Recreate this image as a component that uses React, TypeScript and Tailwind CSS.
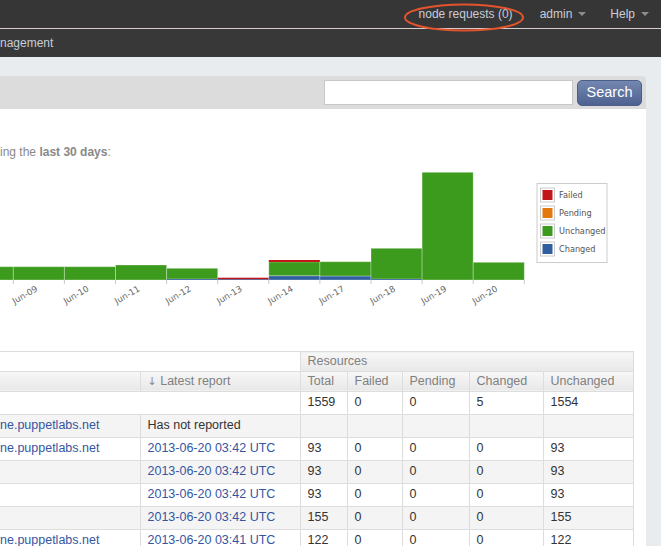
import React from "react";

const GREEN = "#3c9b1c";
const BLUE = "#2f5f9e";
const RED = "#c2161a";
const ORANGE = "#e3780f";

type Seg = { c: string; h: number };
const BW = 51.1;
const X0 = 13.3;
const BASE = 119;

const bars: { x: number; segs: Seg[]; label?: string }[] = [
  { x: X0 - BW, segs: [{ c: GREEN, h: 13.3 }] },
  { x: X0, segs: [{ c: GREEN, h: 13.3 }], label: "Jun-09" },
  { x: X0 + BW, segs: [{ c: GREEN, h: 13.3 }], label: "Jun-10" },
  { x: X0 + BW * 2, segs: [{ c: GREEN, h: 15 }], label: "Jun-11" },
  { x: X0 + BW * 3, segs: [{ c: BLUE, h: 1 }, { c: GREEN, h: 10.7 }], label: "Jun-12" },
  { x: X0 + BW * 4, segs: [{ c: BLUE, h: 0.8 }, { c: RED, h: 1.5 }], label: "Jun-13" },
  { x: X0 + BW * 5, segs: [{ c: BLUE, h: 4.3 }, { c: GREEN, h: 13.7 }, { c: RED, h: 2 }], label: "Jun-14" },
  { x: X0 + BW * 6, segs: [{ c: BLUE, h: 4 }, { c: GREEN, h: 14.3 }], label: "Jun-17" },
  { x: X0 + BW * 7, segs: [{ c: BLUE, h: 1 }, { c: GREEN, h: 30.7 }], label: "Jun-18" },
  { x: X0 + BW * 8, segs: [{ c: GREEN, h: 107.7 }], label: "Jun-19" },
  { x: X0 + BW * 9, segs: [{ c: GREEN, h: 17.7 }], label: "Jun-20" },
];

function Chart() {
  const legend = [
    { c: RED, t: "Failed" },
    { c: ORANGE, t: "Pending" },
    { c: GREEN, t: "Unchanged" },
    { c: BLUE, t: "Changed" },
  ];
  return (
    <svg width="620" height="190" className="block" style={{ fontFamily: "'DejaVu Sans', Verdana, sans-serif" }}>
      {bars.map((b, i) => {
        let y = BASE;
        return (
          <g key={i}>
            {b.segs.map((s, j) => {
              y -= s.h;
              return (
                <rect
                  key={j}
                  x={b.x}
                  y={y}
                  width={BW}
                  height={s.h}
                  fill={s.c}
                  stroke="rgba(255,255,255,0.3)"
                  strokeWidth={s.h > 3 ? 1 : 0}
                />
              );
            })}
          </g>
        );
      })}
      {Array.from({ length: 11 }).map((_, i) => (
        <line key={i} x1={X0 + BW * i} x2={X0 + BW * i} y1={BASE} y2={BASE + 4} stroke="#c8c8c8" strokeWidth="1" />
      ))}
      {bars
        .filter((b) => b.label)
        .map((b, i) => {
          const ax = b.x + BW / 2 - 0.5;
          const ay = 129.5;
          return (
            <text
              key={i}
              x={ax}
              y={ay}
              fontSize="8.6"
              fill="#666"
              textAnchor="end"
              transform={`rotate(-30 ${ax} ${ay})`}
            >
              {b.label}
            </text>
          );
        })}
      <rect x="537" y="22.5" width="70" height="79" fill="#fff" stroke="#cccccc" strokeWidth="1" />
      {legend.map((l, i) => {
        const cy = 34 + i * 18;
        return (
          <g key={l.t}>
            <rect x="540.5" y={cy - 7} width="14" height="14" fill="#fff" stroke="#cccccc" strokeWidth="1" />
            <rect x="542.5" y={cy - 5} width="10" height="10" fill={l.c} />
            <text x="559" y={cy + 3} fontSize="8.2" fill="#545454">
              {l.t}
            </text>
          </g>
        );
      })}
    </svg>
  );
}

const Caret = () => (
  <span className="ml-[6px] inline-block w-0 h-0 border-x-[4px] border-t-[4px] border-x-transparent border-t-[#8c8c8c]" />
);

const LINK = "text-[#35569f]";

type Row = { name: string; report: string; link: boolean; vals: string[] };
const rows: Row[] = [
  { name: "ne.puppetlabs.net", report: "Has not reported", link: false, vals: ["", "", "", "", ""] },
  { name: "ne.puppetlabs.net", report: "2013-06-20 03:42 UTC", link: true, vals: ["93", "0", "0", "0", "93"] },
  { name: "", report: "2013-06-20 03:42 UTC", link: true, vals: ["93", "0", "0", "0", "93"] },
  { name: "", report: "2013-06-20 03:42 UTC", link: true, vals: ["93", "0", "0", "0", "93"] },
  { name: "", report: "2013-06-20 03:42 UTC", link: true, vals: ["155", "0", "0", "0", "155"] },
  { name: "ne.puppetlabs.net", report: "2013-06-20 03:41 UTC", link: true, vals: ["122", "0", "0", "0", "122"] },
];

export default function App() {
  const td = "border border-[#dddddd] px-[7px] h-[23px] whitespace-nowrap overflow-hidden";
  const th = "border border-[#dddddd] px-[7px] h-[19px] font-normal text-left text-[#808080] whitespace-nowrap";
  const grad = "bg-linear-to-b from-[#f7f7f7] to-[#e8e8e8]";
  return (
    <div className="w-[661px] h-[546px] overflow-hidden bg-[#e8ecee] font-['Liberation_Sans',Arial,sans-serif]">
      <div className="relative h-[29px] bg-[#363636] border-b border-[#d8cccc] flex items-center justify-end pr-[12px] text-[12px] text-[#c9cdd8]">
        <span className="mr-[27px]">node requests (0)</span>
        <span className="flex items-center mr-[24px]">
          admin
          <Caret />
        </span>
        <span className="flex items-center">
          Help
          <Caret />
        </span>
        <svg className="absolute left-[403px] top-[3px]" width="122" height="30">
          <ellipse cx="61" cy="14.5" rx="59" ry="13" fill="none" stroke="#e4542c" strokeWidth="2" />
        </svg>
      </div>
      <div className="h-[28px] bg-[#383838] flex items-center text-[12px] text-[#c9cdd8]">
        <span>nagement</span>
      </div>
      <div className="pt-[19px] pr-[15px]">
        <div className="w-[646px] h-[33px] bg-[#dcdcdc] rounded-tr-[4px] flex items-center justify-end pr-[4px] gap-[4px]">
          <div className="w-[249px] h-[25px] bg-white border border-[#c8c8c8]" />
          <button className="w-[65px] h-[26px] rounded-[5px] border border-[#4b5e88] bg-linear-to-b from-[#7487b0] to-[#4e6291] text-white text-[14.5px] leading-none">
            Search
          </button>
        </div>
        <div className="w-[646px] bg-white pt-[34px] h-[460px]">
          <div className="text-[12px] leading-[18px] text-[#888888]">
            ing the <b className="font-bold">last 30 days</b>:
          </div>
          <Chart />
          <table className="table-fixed border-collapse w-[633px] text-[12.5px] text-[#333333]">
            <colgroup>
              <col className="w-[140px]" />
              <col className="w-[160px]" />
              <col className="w-[47px]" />
              <col className="w-[55px]" />
              <col className="w-[67px]" />
              <col className="w-[74px]" />
              <col className="w-[90px]" />
            </colgroup>
            <thead>
              <tr>
                <th colSpan={2} className={`${th} border-l-0 bg-white`}></th>
                <th colSpan={5} className={`${th} ${grad}`}>Resources</th>
              </tr>
              <tr>
                <th className={`${th} ${grad} border-l-0`}></th>
                <th className={`${th} ${grad}`}>
                  <span className="font-['DejaVu_Sans',sans-serif] text-[11px] text-[#8a8a8a]">↓</span> Latest report
                </th>
                <th className={`${th} ${grad}`}>Total</th>
                <th className={`${th} ${grad}`}>Failed</th>
                <th className={`${th} ${grad}`}>Pending</th>
                <th className={`${th} ${grad}`}>Changed</th>
                <th className={`${th} ${grad}`}>Unchanged</th>
              </tr>
            </thead>
            <tbody>
              <tr className="bg-white">
                <td colSpan={2} className={`${td} border-l-0`}></td>
                <td className={td}>1559</td>
                <td className={td}>0</td>
                <td className={td}>0</td>
                <td className={td}>5</td>
                <td className={td}>1554</td>
              </tr>
              {rows.map((r, i) => (
                <tr key={i} className={i % 2 === 0 ? "bg-[#f4f4f4]" : "bg-white"}>
                  <td className={`${td} border-l-0 pl-0 ${LINK}`}>{r.name}</td>
                  <td className={`${td} ${r.link ? LINK : ""}`}>{r.report}</td>
                  {r.vals.map((v, j) => (
                    <td key={j} className={td}>
                      {v}
                    </td>
                  ))}
                </tr>
              ))}
            </tbody>
          </table>
        </div>
      </div>
    </div>
  );
}
